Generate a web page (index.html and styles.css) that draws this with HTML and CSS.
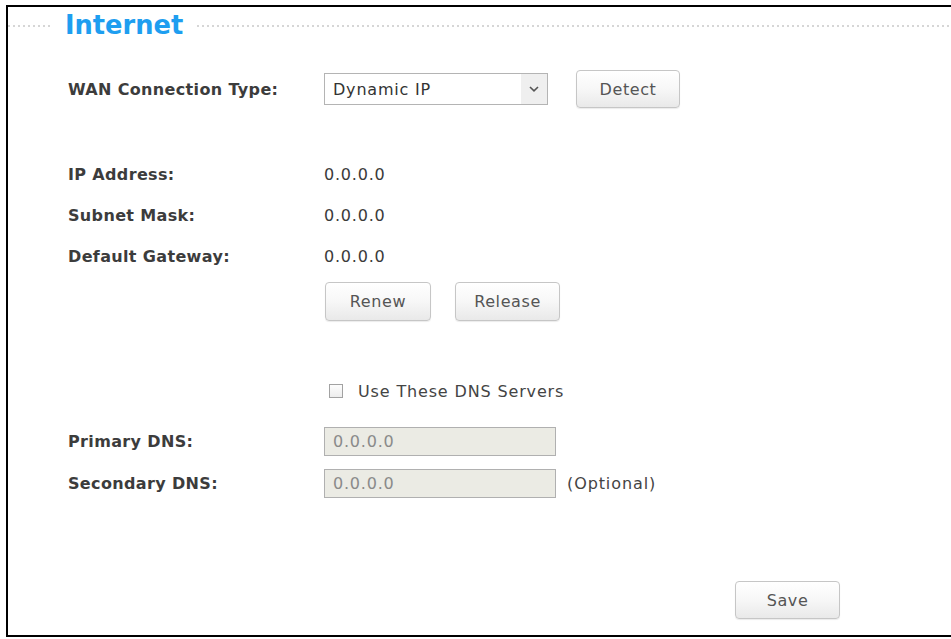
FILE: index.html
```html
<!DOCTYPE html>
<html>
<head>
<meta charset="utf-8">
<link rel="stylesheet" href="styles.css">
</head>
<body>
<div class="frame">
  <div class="legend">
    <span class="dots dots-left"></span>
    <span class="legend-title">Internet</span>
    <span class="dots dots-right"></span>
  </div>

  <div class="form">
    <div class="row row-wan">
      <span class="label">WAN Connection Type:</span>
      <div class="field">
        <div class="select">
          <span class="select-text">Dynamic IP</span>
          <span class="select-arrow">
            <svg width="12" height="8" viewBox="0 0 12 8"><path d="M2 2 L6 5.8 L10 2" fill="none" stroke="#555" stroke-width="1.6"/></svg>
          </span>
        </div>
        <button class="btn btn-detect">Detect</button>
      </div>
    </div>

    <div class="info">
      <div class="row row-info"><span class="label">IP Address:</span><span class="value">0.0.0.0</span></div>
      <div class="row row-info"><span class="label">Subnet Mask:</span><span class="value">0.0.0.0</span></div>
      <div class="row row-info"><span class="label">Default Gateway:</span><span class="value">0.0.0.0</span></div>
    </div>

    <div class="row row-buttons">
      <span class="label"></span>
      <div class="field">
        <button class="btn btn-renew">Renew</button>
        <button class="btn btn-release">Release</button>
      </div>
    </div>

    <div class="row row-check">
      <span class="label"></span>
      <div class="field">
        <span class="checkbox"></span>
        <span class="check-text">Use These DNS Servers</span>
      </div>
    </div>

    <div class="row row-dns row-dns1">
      <span class="label">Primary DNS:</span>
      <div class="field"><div class="input">0.0.0.0</div></div>
    </div>
    <div class="row row-dns row-dns2">
      <span class="label">Secondary DNS:</span>
      <div class="field"><div class="input">0.0.0.0</div><span class="optional">(Optional)</span></div>
    </div>

    <div class="save-row">
      <button class="btn btn-save">Save</button>
    </div>
  </div>
</div>
</body>
</html>
```
FILE: styles.css
```css
html, body {
  margin: 0;
  padding: 0;
  background: #ffffff;
  overflow: hidden;
}
body {
  font-family: "DejaVu Sans", Verdana, sans-serif;
  font-size: 16px;
  color: #333;
}
.frame {
  margin: 5px 0 0 6px;
  border-left: 2px solid #000;
  border-top: 2px solid #000;
  border-bottom: 2px solid #000;
  height: 628px;
  box-sizing: content-box;
}
.legend {
  display: flex;
  align-items: center;
  height: 36px;
}
.dots {
  height: 2px;
  background: repeating-linear-gradient(to right, #d6d6d6 0 2px, transparent 2px 5px);
}
.dots-left {
  width: 42px;
  margin-top: 2px;
}
.dots-right {
  flex: 1;
  margin-top: 2px;
}
.legend-title {
  font-weight: bold;
  font-size: 25.7px;
  color: #1e9ef0;
  padding: 0 14px 0 15px;
  line-height: 36px;
}
.form {
  padding-left: 60px;
}
.row {
  display: flex;
  align-items: center;
}
.label {
  width: 256px;
  flex: none;
  font-weight: bold;
  color: #3c3c3c;
  letter-spacing: 0.35px;
}
.field {
  display: flex;
  align-items: center;
}
.value {
  letter-spacing: 0.8px;
  color: #3a3a3a;
}
.row-wan {
  margin-top: 27px;
  height: 38px;
}
.select {
  width: 224px;
  height: 32px;
  box-sizing: border-box;
  border: 1px solid #b4b4b4;
  display: flex;
  align-items: center;
  justify-content: space-between;
  background: #fff;
}
.select-text {
  padding-left: 8px;
  letter-spacing: 0.8px;
  color: #333;
}
.select-arrow {
  width: 26px;
  height: 30px;
  background: #efefef;
  display: flex;
  align-items: center;
  justify-content: center;
}
.btn {
  font-family: "DejaVu Sans", Verdana, sans-serif;
  font-size: 16px;
  letter-spacing: 0.6px;
  color: #555;
  background: linear-gradient(to bottom, #ffffff 0%, #f7f7f7 50%, #e9e9e9 100%);
  border: 1px solid #c6c6c6;
  border-radius: 4px;
  box-shadow: 0 1px 1px rgba(0,0,0,0.08);
  padding: 0;
  box-sizing: border-box;
}
.btn-detect {
  width: 104px;
  height: 38px;
  margin-left: 28px;
}
.info {
  margin-top: 46px;
}
.row-info {
  height: 41px;
}
.row-buttons {
  margin-top: 5px;
  height: 39px;
}
.btn-renew {
  width: 106px;
  height: 39px;
  margin-left: 1px;
}
.btn-release {
  width: 105px;
  height: 39px;
  margin-left: 24px;
}
.row-check {
  margin-top: 55px;
  height: 30px;
}
.checkbox {
  width: 14px;
  height: 14px;
  box-sizing: border-box;
  border: 1px solid #a2a2a2;
  background: linear-gradient(to bottom, #fdfdfd, #ededed);
  margin-left: 5px;
}
.check-text {
  margin-left: 15px;
  letter-spacing: 0.85px;
  color: #444;
}
.row-dns {
  height: 29px;
}
.row-dns1 {
  margin-top: 21px;
}
.row-dns2 {
  margin-top: 13px;
}
.input {
  width: 232px;
  height: 29px;
  box-sizing: border-box;
  border: 1px solid #b0b0b0;
  background: #ebebe4;
  color: #8a8a8a;
  padding-left: 8px;
  display: flex;
  align-items: center;
  letter-spacing: 0.8px;
}
.optional {
  margin-left: 11px;
  letter-spacing: 0.9px;
  color: #444;
}
.save-row {
  margin-top: 83px;
  padding-left: 667px;
}
.btn-save {
  width: 105px;
  height: 38px;
}
```
